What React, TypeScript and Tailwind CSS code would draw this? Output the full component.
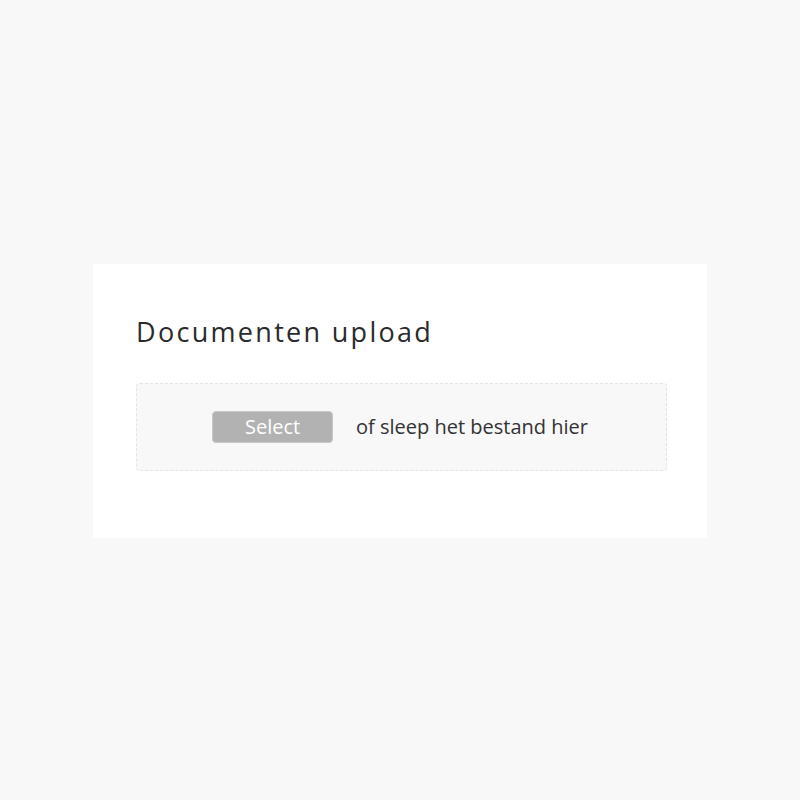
export default function App() {
  return (
    <div className="min-h-[800px] w-full bg-[#f8f8f8] flex items-center justify-center">
      <div className="w-[614px] bg-white pl-[43px] pr-[40px] pt-[52px] pb-[67px] mt-[1px]">
        <h1 className="text-[27px] leading-[32px] text-[#2b2b2b] font-['Open_Sans',sans-serif] tracking-[2.3px] mb-[35px]">
          Documenten upload
        </h1>
        <div className="h-[88px] rounded-[4px] border border-dashed border-[#e4e4e4] bg-[#f8f8f8] flex items-center justify-center gap-[23px] font-['Open_Sans',sans-serif] pr-[3px]">
          <button className="w-[121px] h-[32px] rounded-[4px] bg-[#b2b2b2] border border-[#c8c8c8] text-white text-[20px] leading-none">
            Select
          </button>
          <span className="text-[20px] text-[#333333]">of sleep het bestand hier</span>
        </div>
      </div>
    </div>
  );
}
